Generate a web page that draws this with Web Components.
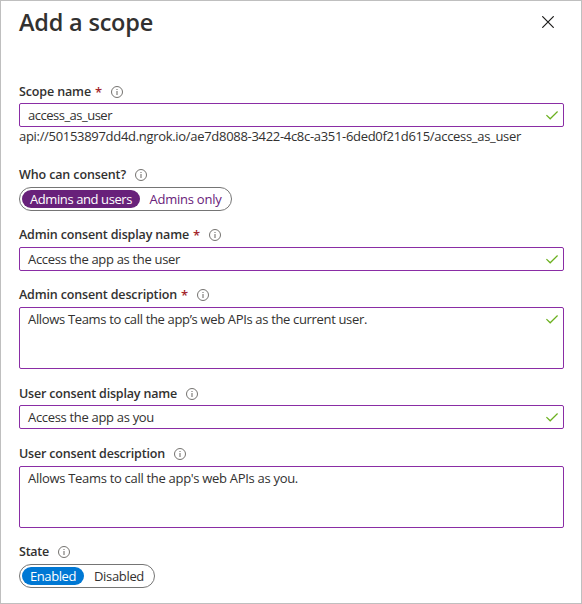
<!DOCTYPE html>
<html lang="en">
<head>
<meta charset="utf-8">
<title>Add a scope</title>
<style>
body { margin: 0; background: #fff; font: 13px/20px "Open Sans", "Noto Sans", sans-serif; color: #323130; }
</style>
</head>
<body>
<scope-panel></scope-panel>
<script>
function define(name, html, setup) {
  const template = document.createElement('template');
  template.innerHTML = html;
  customElements.define(name, class extends HTMLElement {
    connectedCallback() {
      if (this.shadowRoot) return;
      this.attachShadow({ mode: 'open' }).append(template.content.cloneNode(true));
      if (setup) setup(this, this.shadowRoot);
    }
  });
}

// Text run whose tracking is adjusted so that it occupies the given width.
define('fit-text', `<style>:host{display:inline-block;white-space:nowrap;flex:none}span{display:inline-block}</style><span><slot></slot></span>`,
  (el, root) => {
    const width = Number(el.getAttribute('width'));
    const span = root.querySelector('span');
    const natural = span.getBoundingClientRect().width;
    span.style.letterSpacing = (width - natural) / el.textContent.length + 'px';
    el.style.width = width + 'px';
  });

define('info-icon', `<style>:host{display:block;width:12px;height:12px;flex:none}svg{display:block}</style>
<svg width="12" height="12" viewBox="0 0 12 12" fill="none"><circle cx="6" cy="6" r="5.5" stroke="#74726f"/><path d="M6 5v4" stroke="#74726f" stroke-width="1.1"/><path d="M6 3v1" stroke="#74726f" stroke-width="1.1"/></svg>`);

define('check-icon', `<style>:host{display:block;width:12px;height:9px;flex:none}svg{display:block}</style>
<svg width="12" height="9" viewBox="0 0 12 9" fill="none"><path d="M.4 4.1 4.2 7.8 11.6.5" stroke="#6bb01f" stroke-width="1.25"/></svg>`);

define('close-button', `<style>:host{display:block;width:12px;height:12px}svg{display:block}</style>
<svg width="12" height="12" viewBox="0 0 12 12"><path d="M.3.3 11.7 11.7M11.7.3.3 11.7" stroke="#1b1a19" stroke-width="1.2"/></svg>`);

define('field-label', `<style>
:host{display:flex;align-items:center;height:var(--label-height,24px);font-weight:600;font-size:12.5px;color:#323130}
.star{color:#a4262c;width:7px;margin-left:4px;font-size:13px;font-weight:600}
info-icon{margin-left:9px}
</style><fit-text></fit-text><span class="star">*</span><info-icon></info-icon>`,
  (el, root) => {
    const t = document.createElement('fit-text');
    t.setAttribute('width', el.getAttribute('width'));
    t.textContent = el.getAttribute('text');
    root.querySelector('fit-text').replaceWith(t);
    if (!el.hasAttribute('required')) root.querySelector('.star').remove();
  });

define('text-field', `<style>
:host{display:flex;justify-content:space-between;box-sizing:border-box;width:545px;height:24px;border:1px solid #8a2da5;border-radius:2px;padding:1px 5px 0 8px}
:host([multiline]){height:62px}
check-icon{margin-top:6px}
</style><slot></slot><check-icon></check-icon>`,
  (el, root) => { if (!el.hasAttribute('valid')) root.querySelector('check-icon').remove(); });

define('option-pill', `<style>
:host{display:flex;flex:none;box-sizing:border-box;align-items:center;justify-content:center;height:18px;line-height:18px;border-radius:9px;color:var(--plain,#323130);padding-left:2px}
:host([selected]){background:var(--accent);color:#fff;padding-left:0}
</style><slot></slot>`);

define('option-toggle', `<style>
:host{display:flex;box-sizing:border-box;height:24px;border:1px solid #757575;border-radius:12px;padding:2px}
</style><slot></slot>`);

define('scope-panel', `<style>
:host{display:block;box-sizing:border-box;width:582px;height:604px;border:1px solid #bfbfbf;padding:0 17px 0 18px;background:#fff}
header{display:flex;justify-content:space-between;height:80px}
h1{margin:3px 0 0;font-size:23.5px;line-height:36px;font-weight:600;color:#323130}
close-button{margin:15px 10px 0 0}
section{display:block}
.scope{height:82px}.who{height:60px}.admin-name{height:60px}.admin-desc{height:100px}.user-name{height:59px}.user-desc{height:98px}
.uri{display:block;line-height:18px}
.tight{--label-height:22px}
</style>
<header><h1><fit-text width="134">Add a scope</fit-text></h1><close-button></close-button></header>
<section class="scope tight"><field-label text="Scope name" width="72" required></field-label>
<text-field valid><fit-text width="84">access_as_user</fit-text></text-field>
<fit-text class="uri" width="502">api://50153897dd4d.ngrok.io/ae7d8088-3422-4c8c-a351-6ded0f21d615/access_as_user</fit-text></section>
<section class="who"><field-label text="Who can consent?" width="107"></field-label>
<option-toggle style="width:213px;--accent:#68217a;--plain:#68217a"><option-pill selected style="width:118px"><fit-text width="102">Admins and users</fit-text></option-pill><option-pill style="width:89px"><fit-text width="72">Admins only</fit-text></option-pill></option-toggle></section>
<section class="admin-name"><field-label text="Admin consent display name" width="170" required></field-label>
<text-field valid><fit-text width="152">Access the app as the user</fit-text></text-field></section>
<section class="admin-desc"><field-label text="Admin consent description" width="158" required></field-label>
<text-field valid multiline><fit-text width="339">Allows Teams to call the app’s web APIs as the current user.</fit-text></text-field></section>
<section class="user-name tight"><field-label text="User consent display name" width="158"></field-label>
<text-field valid><fit-text width="126">Access the app as you</fit-text></text-field></section>
<section class="user-desc"><field-label text="User consent description" width="146"></field-label>
<text-field multiline><fit-text width="270">Allows Teams to call the app's web APIs as you.</fit-text></text-field></section>
<section><field-label text="State" width="30"></field-label>
<option-toggle style="width:136px;--accent:#0078d4"><option-pill selected style="width:62px"><fit-text width="46">Enabled</fit-text></option-pill><option-pill style="width:68px"><fit-text width="50">Disabled</fit-text></option-pill></option-toggle></section>`);
</script>
</body>
</html>
